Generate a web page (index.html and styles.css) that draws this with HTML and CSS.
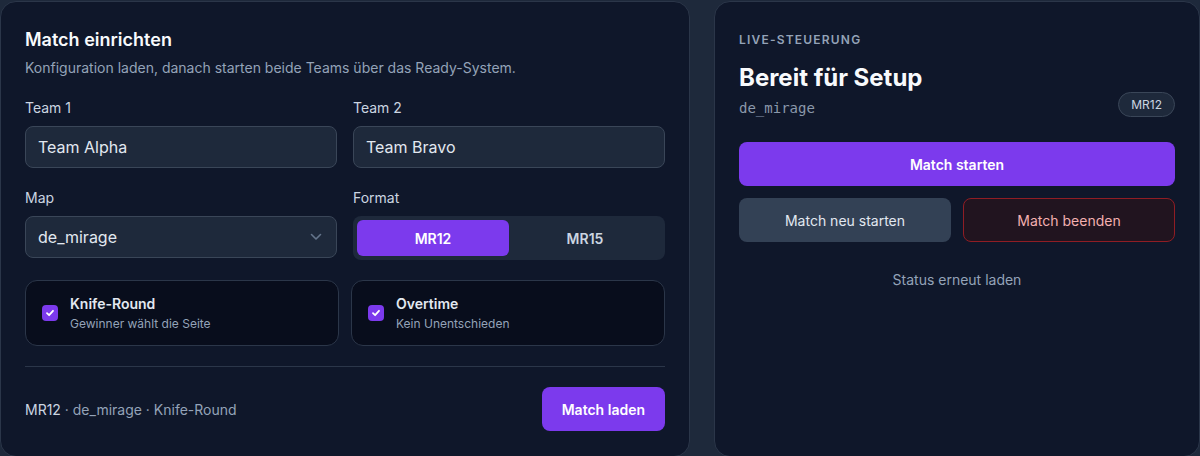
FILE: index.html
```html
<!DOCTYPE html>
<html lang="de">
<head>
    <meta charset="UTF-8">
    <meta name="viewport" content="width=device-width, initial-scale=1.0">
    <title>Match einrichten</title>
    <link rel="stylesheet" href="styles.css">
</head>
<body>
    <div class="layout">
        <section class="card setup">
            <h2>Match einrichten</h2>
            <p class="subtitle">Konfiguration laden, danach starten beide Teams über das Ready-System.</p>

            <div class="fields">
                <div class="field">
                    <label>Team 1</label>
                    <div class="input">Team Alpha</div>
                </div>
                <div class="field">
                    <label>Team 2</label>
                    <div class="input">Team Bravo</div>
                </div>
                <div class="field">
                    <label>Map</label>
                    <div class="input select">
                        <span>de_mirage</span>
                        <svg width="12" height="8" viewBox="0 0 12 8"><path d="M1.5 1.5 6 6 10.5 1.5" fill="none" stroke="#64748b" stroke-width="1.6" stroke-linecap="round" stroke-linejoin="round"/></svg>
                    </div>
                </div>
                <div class="field">
                    <label>Format</label>
                    <div class="segmented">
                        <button class="seg active">MR12</button>
                        <button class="seg">MR15</button>
                    </div>
                </div>
            </div>

            <div class="options">
                <div class="option">
                    <span class="check"><svg width="10" height="10" viewBox="0 0 10 10"><path d="M2 5.2 4.1 7.2 8 2.8" fill="none" stroke="#fff" stroke-width="1.8" stroke-linecap="round" stroke-linejoin="round"/></svg></span>
                    <div>
                        <div class="option-title">Knife-Round</div>
                        <div class="option-sub">Gewinner wählt die Seite</div>
                    </div>
                </div>
                <div class="option">
                    <span class="check"><svg width="10" height="10" viewBox="0 0 10 10"><path d="M2 5.2 4.1 7.2 8 2.8" fill="none" stroke="#fff" stroke-width="1.8" stroke-linecap="round" stroke-linejoin="round"/></svg></span>
                    <div>
                        <div class="option-title">Overtime</div>
                        <div class="option-sub">Kein Unentschieden</div>
                    </div>
                </div>
            </div>

            <div class="divider"></div>

            <div class="footer">
                <div class="summary"><span class="strong">MR12</span> · de_mirage · Knife-Round</div>
                <button class="btn primary">Match laden</button>
            </div>
        </section>

        <section class="card live">
            <div class="eyebrow">LIVE-STEUERUNG</div>
            <div class="live-head">
                <div>
                    <h1>Bereit für Setup</h1>
                    <div class="map-code">de_mirage</div>
                </div>
                <span class="pill">MR12</span>
            </div>

            <button class="btn primary wide">Match starten</button>
            <div class="btn-row">
                <button class="btn secondary">Match neu starten</button>
                <button class="btn danger">Match beenden</button>
            </div>
            <button class="link">Status erneut laden</button>
        </section>
    </div>
</body>
</html>
```

FILE: styles.css
```css
* { margin: 0; padding: 0; box-sizing: border-box; }
body {
    font-family: 'Inter', 'Noto Sans', sans-serif;
    background: #1e293b;
    color: #e2e8f0;
    overflow: hidden;
}
.layout {
    display: grid;
    grid-template-columns: 690px 486px;
    gap: 24px;
    padding-top: 1px;
}
.card {
    background: #0f172a;
    border: 1px solid #2b3649;
    border-radius: 16px;
    padding: 24px 24px 25px;
}
h2 {
    font-size: 18px;
    line-height: 28px;
    font-weight: 600;
    color: #f8fafc;
}
.subtitle {
    margin-top: 4px;
    font-size: 14px;
    line-height: 20px;
    color: #94a3b8;
}
.fields {
    display: grid;
    grid-template-columns: 1fr 1fr;
    gap: 20px 16px;
    margin-top: 20px;
}
.field label {
    display: block;
    font-size: 14px;
    line-height: 20px;
    color: #cbd5e1;
    margin-bottom: 8px;
}
.input {
    height: 42px;
    display: flex;
    align-items: center;
    padding: 0 12px;
    background: #1e293b;
    border: 1px solid #3a4658;
    border-radius: 8px;
    font-size: 16px;
    color: #e2e8f0;
}
.select {
    justify-content: space-between;
    padding-right: 14px;
}
.segmented {
    display: grid;
    grid-template-columns: 1fr 1fr;
    padding: 4px;
    background: #1e293b;
    border-radius: 8px;
}
.seg {
    height: 36px;
    border: none;
    background: none;
    border-radius: 6px;
    font-family: inherit;
    font-size: 14px;
    font-weight: 600;
    color: #cbd5e1;
}
.seg.active {
    background: #7c3aed;
    color: #fff;
}
.options {
    display: grid;
    grid-template-columns: 1fr 1fr;
    gap: 12px;
    margin-top: 20px;
}
.option {
    display: flex;
    align-items: center;
    gap: 12px;
    padding: 13px 16px 13px;
    background: #080d1c;
    border: 1px solid #2b3649;
    border-radius: 12px;
}
.check {
    width: 16px;
    height: 16px;
    border-radius: 4px;
    background: #7c3aed;
    display: flex;
    align-items: center;
    justify-content: center;
    flex-shrink: 0;
}
.option-title {
    font-size: 14px;
    line-height: 20px;
    font-weight: 600;
    color: #e2e8f0;
}
.option-sub {
    margin-top: 2px;
    font-size: 12px;
    line-height: 16px;
    color: #94a3b8;
}
.divider {
    height: 1px;
    background: #2b3649;
    margin-top: 20px;
}
.footer {
    display: flex;
    justify-content: space-between;
    align-items: center;
    margin-top: 20px;
}
.summary {
    font-size: 14px;
    color: #94a3b8;
}
.summary .strong { color: #cbd5e1; }
.btn {
    height: 44px;
    padding: 0 20px;
    border: none;
    border-radius: 8px;
    font-family: inherit;
    font-size: 14px;
    cursor: pointer;
}
.btn.primary {
    background: #7c3aed;
    color: #fff;
    font-weight: 600;
}
.eyebrow {
    margin-top: 6px;
    font-size: 12px;
    line-height: 16px;
    font-weight: 600;
    letter-spacing: 0.1em;
    color: #94a3b8;
}
.live-head {
    display: flex;
    justify-content: space-between;
    align-items: flex-end;
}
h1 {
    margin-top: 14px;
    font-size: 24px;
    line-height: 32px;
    font-weight: 700;
    color: #f8fafc;
}
.map-code {
    margin-top: 4px;
    font-family: 'DejaVu Sans Mono', 'Liberation Mono', monospace;
    font-size: 14px;
    line-height: 20px;
    color: #8b98ab;
}
.pill {
    padding: 4px 12px;
    font-size: 12px;
    line-height: 15px;
    color: #cbd5e1;
    background: #1e293b;
    border: 1px solid #3a4658;
    border-radius: 999px;
    margin-bottom: 1px;
}
.btn.wide {
    display: block;
    width: 100%;
    margin-top: 24px;
}
.btn-row {
    display: grid;
    grid-template-columns: 1fr 1fr;
    gap: 12px;
    margin-top: 12px;
}
.btn.secondary {
    background: #334155;
    color: #e2e8f0;
}
.btn.danger {
    background: #21141f;
    border: 1px solid #8f1d24;
    color: #f3b0b0;
}
.link {
    display: block;
    margin: 28px auto 0;
    border: none;
    background: none;
    font-family: inherit;
    font-size: 14px;
    line-height: 20px;
    color: #94a3b8;
}
```
